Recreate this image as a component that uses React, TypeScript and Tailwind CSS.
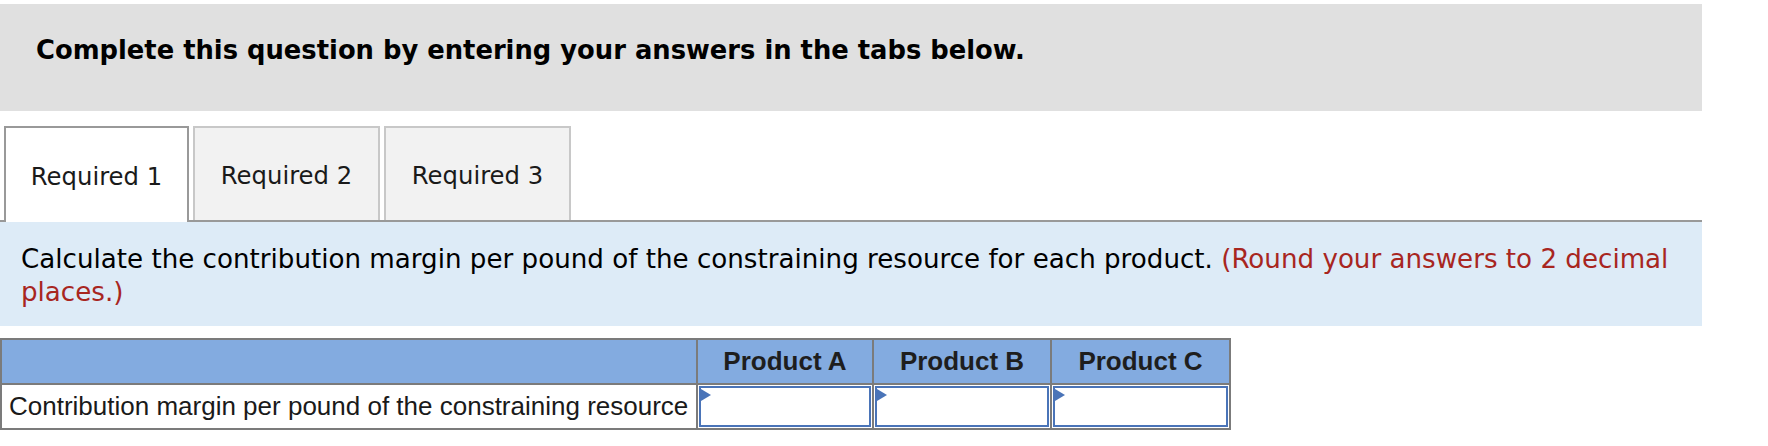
export default function App() {
  const InputCell = () => (
    <div className="relative h-[41px] mx-[1px] border-2 border-[#4a74b8] bg-white">
      <div className="absolute top-[1px] left-0 w-0 h-0 border-y-[6px] border-y-transparent border-l-[10px] border-l-[#4a74b8]" />
    </div>
  );
  return (
    <div className="w-[1768px] h-[446px] bg-white overflow-hidden font-['DejaVu_Sans',sans-serif]">
      <div className="mt-[4px] h-[107px] w-[1702px] bg-[#e0e0e0] pl-[36px] pt-[31px]">
        <p className="text-[25.8px] leading-[30px] font-bold text-black">
          Complete this question by entering your answers in the tabs below.
        </p>
      </div>
      <div className="mt-[15px] w-[1702px] flex items-end gap-[4px] pl-[4px] border-b-2 border-[#999999]">
        <div className="relative -mb-[2px] w-[185px] h-[96px] bg-white border-2 border-b-0 border-[#999999] flex items-center justify-center pt-[4px] text-[24.3px] text-[#1a1a1a]">
          Required 1
        </div>
        <div className="w-[187px] h-[94px] bg-[#f2f2f2] border-2 border-b-0 border-[#c8c8c8] flex items-center justify-center pt-[4px] text-[24.3px] text-[#1a1a1a]">
          Required 2
        </div>
        <div className="w-[187px] h-[94px] bg-[#f2f2f2] border-2 border-b-0 border-[#c8c8c8] flex items-center justify-center pt-[4px] text-[24.3px] text-[#1a1a1a]">
          Required 3
        </div>
      </div>
      <div className="w-[1702px] h-[104px] bg-[#ddebf7] pl-[21px] pt-[21px] text-[26.15px] leading-[33px] text-black whitespace-nowrap">
        Calculate the contribution margin per pound of the constraining resource for each product.{" "}
        <span className="text-[#a8261f]">
          (Round your answers to 2 decimal
          <br />
          places.)
        </span>
      </div>
      <table className="mt-[12px] w-[1229px] table-fixed border-collapse font-['Liberation_Sans',Arial,sans-serif] text-[26px]">
        <colgroup>
          <col className="w-[696px]" />
          <col className="w-[176px]" />
          <col className="w-[178px]" />
          <col className="w-[179px]" />
        </colgroup>
        <thead>
          <tr className="h-[45px] bg-[#83abe0]">
            <th className="border-2 border-[#7b7b7b]"></th>
            <th className="border-2 border-[#7b7b7b] font-bold text-center text-[#1e1e1e]">Product A</th>
            <th className="border-2 border-[#7b7b7b] font-bold text-center text-[#1e1e1e]">Product B</th>
            <th className="border-2 border-[#7b7b7b] font-bold text-center text-[#1e1e1e]">Product C</th>
          </tr>
        </thead>
        <tbody>
          <tr className="h-[45px]">
            <td className="border-2 border-[#7b7b7b] pl-[7px] text-left whitespace-nowrap text-[#1a1a1a]">
              Contribution margin per pound of the constraining resource
            </td>
            <td className="border-2 border-[#7b7b7b] p-0"><InputCell /></td>
            <td className="border-2 border-[#7b7b7b] p-0"><InputCell /></td>
            <td className="border-2 border-[#7b7b7b] p-0"><InputCell /></td>
          </tr>
        </tbody>
      </table>
    </div>
  );
}
